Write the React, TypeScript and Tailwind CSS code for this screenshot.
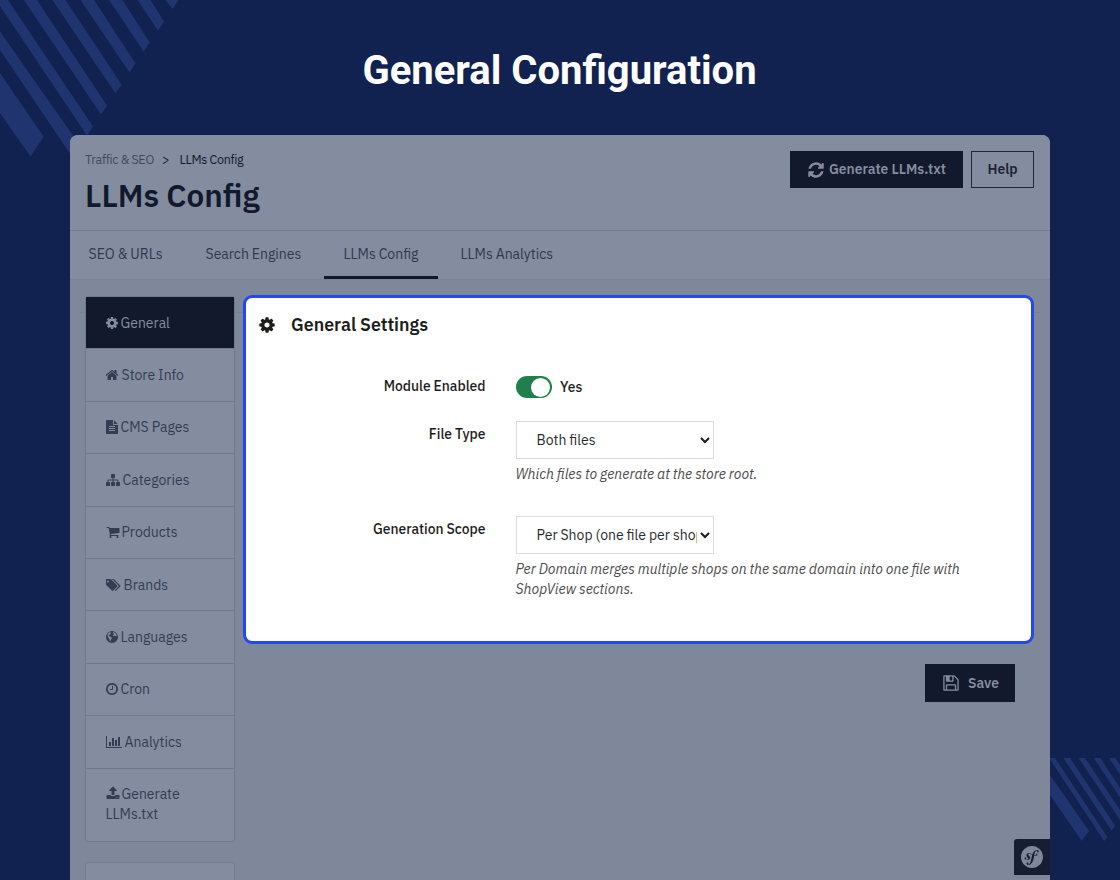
import type { ReactNode } from 'react';
import { SiSymfony } from 'react-icons/si';

interface GlyphProps {
  d: string;
  width?: number;
  className?: string;
}

function Glyph({ d, width = 1792, className = '' }: GlyphProps) {
  return (
    <svg viewBox={`0 0 ${width} 1792`} fill="currentColor" className={`inline-block shrink-0 ${className}`}>
      <path d={d} />
    </svg>
  );
}

const COG =
  'M1152 896q0-106-75-181t-181-75-181 75-75 181 75 181 181 75 181-75 75-181zm512-109v222q0 12-8 23t-20 13l-185 28q-19 54-39 91 35 50 107 138 10 12 10 25t-9 23q-27 37-99 108t-94 71q-12 0-26-9l-138-108q-44 23-91 38-16 136-29 186-7 28-36 28h-222q-14 0-24.5-8.5t-11.5-21.5l-28-184q-49-16-90-37l-141 107q-10 9-25 9-14 0-25-11-126-114-165-168-7-10-7-23 0-12 8-23 15-21 51-66.5t54-70.5q-27-50-41-99l-183-27q-13-2-21-12.5t-8-23.5v-222q0-12 8-23t19-13l186-28q14-46 39-92-40-57-107-138-10-12-10-24 0-10 9-23 26-36 98.5-107.5t94.5-71.5q13 0 26 10l138 107q44-23 91-38 16-136 29-186 7-28 36-28h222q14 0 24.5 8.5t11.5 21.5l28 184q49 16 90 37l142-107q9-9 24-9 13 0 25 10 129 119 165 170 7 8 7 22 0 12-8 23-15 21-51 66.5t-54 70.5q26 50 41 98l183 28q13 2 21 12.5t8 23.5z';
const HOME =
  'M1472 992v480q0 26-19 45t-45 19h-384v-384h-256v384h-384q-26 0-45-19t-19-45v-480q0-1 .5-3t.5-3l575-474 575 474q1 2 1 6zm223-69l-62 74q-8 9-21 11h-3q-13 0-21-7l-692-577-692 577q-12 8-24 7-13-2-21-11l-62-74q-8-10-7-23.5t11-21.5l719-599q32-26 76-26t76 26l244 204v-195q0-14 9-23t23-9h192q14 0 23 9t9 23v408l219 182q10 8 11 21.5t-7 23.5z';
const FILE_TEXT =
  'M1596 476q14 14 28 36h-472v-472q22 14 36 28zm-476 164h544v1056q0 40-28 68t-68 28h-1344q-40 0-68-28t-28-68v-1600q0-40 28-68t68-28h800v544q0 40 28 68t68 28zm160 736v-64q0-14-9-23t-23-9h-704q-14 0-23 9t-9 23v64q0 14 9 23t23 9h704q14 0 23-9t9-23zm0-256v-64q0-14-9-23t-23-9h-704q-14 0-23 9t-9 23v64q0 14 9 23t23 9h704q14 0 23-9t9-23zm0-256v-64q0-14-9-23t-23-9h-704q-14 0-23 9t-9 23v64q0 14 9 23t23 9h704q14 0 23-9t9-23z';
const SITEMAP =
  'M1792 1248v320q0 40-28 68t-68 28h-320q-40 0-68-28t-28-68v-320q0-40 28-68t68-28h96v-192h-512v192h96q40 0 68 28t28 68v320q0 40-28 68t-68 28h-320q-40 0-68-28t-28-68v-320q0-40 28-68t68-28h96v-192h-512v192h96q40 0 68 28t28 68v320q0 40-28 68t-68 28h-320q-40 0-68-28t-28-68v-320q0-40 28-68t68-28h96v-192q0-52 38-90t90-38h512v-192h-96q-40 0-68-28t-28-68v-320q0-40 28-68t68-28h320q40 0 68 28t28 68v320q0 40-28 68t-68 28h-96v192h512q52 0 90 38t38 90v192h96q40 0 68 28t28 68z';
const CART =
  'M704 1536q0 52-38 90t-90 38-90-38-38-90 38-90 90-38 90 38 38 90zm896 0q0 52-38 90t-90 38-90-38-38-90 38-90 90-38 90 38 38 90zm128-1088v512q0 24-16.5 42.5t-40.5 21.5l-1044 122q13 60 13 70 0 16-24 64h920q26 0 45 19t19 45-19 45-45 19h-1024q-26 0-45-19t-19-45q0-11 8-31.5t16-36 21.5-40 15.5-29.5l-177-823h-204q-26 0-45-19t-19-45 19-45 45-19h256q16 0 28.5 6.5t19.5 15.5 13 24.5 8 26 5.5 29.5 4.5 26h1201q26 0 45 19t19 45z';
const TAGS =
  'M384 448q0-53-37.5-90.5t-90.5-37.5-90.5 37.5-37.5 90.5 37.5 90.5 90.5 37.5 90.5-37.5 37.5-90.5zm1067 576q0 53-37 90l-491 492q-39 37-91 37-53 0-90-37l-715-716q-38-37-64.5-101t-26.5-117v-416q0-52 38-90t90-38h416q53 0 117 26.5t102 64.5l715 714q37 39 37 91zm384 0q0 53-37 90l-491 492q-39 37-91 37-36 0-59-14t-53-45l470-470q37-37 37-90 0-52-37-91l-715-714q-38-38-102-64.5t-117-26.5h224q53 0 117 26.5t102 64.5l715 714q37 39 37 91z';
const GLOBE =
  'M896 128a768 768 0 1 0 0 1536a768 768 0 1 0 0-1536zM1010 300l230 20 200 200 80 230-130 60-170-70-90 50-110-90 60-120 100-40-80-90-90 30zM330 540l160-190 190-70 100 90-120 140-70 130-110 60 60 90 120 60 170 80 60 110-110 150-80 240-90-20-60-270-110-160-90-170z';
const CLOCK =
  'M1024 544v448q0 14-9 23t-23 9h-320q-14 0-23-9t-9-23v-64q0-14 9-23t23-9h224v-352q0-14 9-23t23-9h64q14 0 23 9t9 23zm416 352q0-148-73-273t-198-198-273-73-273 73-198 198-73 273 73 273 198 198 273 73 273-73 198-198 73-273zm224 0q0 209-103 385.5t-279.5 279.5-385.5 103-385.5-103-279.5-279.5-103-385.5 103-385.5 279.5-279.5 385.5-103 385.5 103 279.5 279.5 103 385.5z';
const CHART =
  'M640 896v512h-256v-512h256zm384-512v1024h-256v-1024h256zm1024 1152v128h-2048v-1536h128v1408h1920zm-640-896v768h-256v-768h256zm384-384v1152h-256v-1152h256z';
const UPLOAD =
  'M1344 1472q0-26-19-45t-45-19-45 19-19 45 19 45 45 19 45-19 19-45zm256 0q0-26-19-45t-45-19-45 19-19 45 19 45 45 19 45-19 19-45zm128-224v320q0 40-28 68t-68 28h-1472q-40 0-68-28t-28-68v-320q0-40 28-68t68-28h427q21 56 70.5 92t110.5 36h256q61 0 110.5-36t70.5-92h427q40 0 68 28t28 68zm-325-648q-17 40-59 40h-256v448q0 26-19 45t-45 19h-256q-26 0-45-19t-19-45v-448h-256q-42 0-59-40-17-39 14-69l448-448q18-19 45-19t45 19l448 448q31 30 14 69z';
const REFRESH =
  'M1639 1056q0 5-1 7-64 268-268 434.5t-478 166.5q-146 0-282.5-55t-243.5-157l-129 129q-19 19-45 19t-45-19-19-45v-448q0-26 19-45t45-19h448q26 0 45 19t19 45-19 45l-137 137q71 66 161 102t187 36q134 0 250-65t186-179q11-17 53-117 8-23 30-23h192q13 0 22.5 9.5t9.5 22.5zm25-800v448q0 26-19 45t-45 19h-448q-26 0-45-19t-19-45 19-45l138-138q-148-137-349-137-134 0-250 65t-186 179q-11 17-53 117-8 23-30 23h-199q-13 0-22.5-9.5t-9.5-22.5v-7q65-268 270-434.5t480-166.5q146 0 284 55.5t245 156.5l130-129q19-19 45-19t45 19 19 45z';
const FLOPPY =
  'M512 1536h768v-384h-768v384zm896 0h128v-896q0-14-10-38.5t-20-34.5l-281-281q-10-10-34-20t-39-10v416q0 40-28 68t-68 28h-576q-40 0-68-28t-28-68v-416h-128v1280h128v-416q0-40 28-68t68-28h832q40 0 68 28t28 68v416zm-384-928v-320q0-13-9.5-22.5t-22.5-9.5h-192q-13 0-22.5 9.5t-9.5 22.5v320q0 13 9.5 22.5t22.5 9.5h192q13 0 22.5-9.5t9.5-22.5zm640 32v928q0 40-28 68t-68 28h-1344q-40 0-68-28t-28-68v-1344q0-40 28-68t68-28h928q40 0 88 20t76 48l280 280q28 28 48 76t20 88z';

const menu = [
  { label: 'General', icon: COG, size: 'w-[14px] -ml-[1px]', gap: 'ml-[2px]', active: true },
  { label: 'Store Info', icon: HOME, size: 'w-[14px] -ml-[0.5px]', gap: 'ml-[2.5px]' },
  { label: 'CMS Pages', icon: FILE_TEXT, size: 'w-[14px] -ml-[1px]', gap: 'ml-[2px]' },
  { label: 'Categories', icon: SITEMAP, size: 'w-[14px]', gap: 'ml-[3px]' },
  { label: 'Products', icon: CART, size: 'w-[14px]', gap: 'ml-[2px]' },
  { label: 'Brands', icon: TAGS, width: 1920, size: 'w-[15px]', gap: 'ml-[3px]' },
  { label: 'Languages', icon: GLOBE, size: 'w-[14px] -ml-[1px]', gap: 'ml-[2px]' },
  { label: 'Cron', icon: CLOCK, size: 'w-[14px] -ml-[1px]', gap: 'ml-[2px]' },
  { label: 'Analytics', icon: CHART, width: 2048, size: 'w-[16px]', gap: 'ml-[3px]' },
];

function TopStripes() {
  return (
    <svg viewBox="0 0 180 157" fill="#20356f" className="absolute left-0 top-0 h-[157px] w-[180px]">
      <path d="M0 73V113L30.500 156.500L43.700 136.700z" />
      <path d="M0 31.500V50L72 156.500L79.500 145z" />
      <path d="M-4 0H8L93 126.500L87 135.500z" />
      <path d="M24 0H37L107 105.500L101 114.500z" />
      <path d="M52.500 0H65.500L121.500 84.500L115.500 93.500z" />
      <path d="M80.500 0H94L135.500 63.500L129.500 72.500z" />
      <path d="M109 0H122.500L149.700 42.500L143.700 51.500z" />
      <path d="M137.500 0H150.500L164 21.500L158 30.500z" />
      <path d="M165.500 0H178.500L172.500 9z" />
    </svg>
  );
}

function BottomStripes() {
  return (
    <svg viewBox="0 0 70 84" fill="#20356f" className="absolute right-0 top-[758px] h-[84px] w-[70px]">
      <path d="M0 17L39 73L31.700 83L0 37z" />
      <path d="M-1 0H5L57.300 79L54.300 83z" />
      <path d="M13.300 0H20L65.300 68L61.500 72.500z" />
      <path d="M28.700 0H35L70 52V62z" />
      <path d="M43.700 0H50.300L70 30V39.500z" />
      <path d="M59 0H65.500L70 7V16.500z" />
    </svg>
  );
}

function SelectBox({ value }: { value: string }) {
  return (
    <div className="flex h-[38px] w-[198px] items-center border border-[#dddddd] bg-white pl-5 pr-[3px]">
      <span className="w-[160.5px] overflow-hidden whitespace-nowrap leading-5 text-[#282b30]">{value}</span>
      <svg viewBox="0 0 10 8" className="ml-auto h-2 w-[10px] fill-none stroke-[#1d1d1b] stroke-2">
        <path d="M1 2l4 4 4-4" />
      </svg>
    </div>
  );
}

interface RowProps {
  label: string;
  labelClass?: string;
  children: ReactNode;
}

function Row({ label, labelClass = '', children }: RowProps) {
  return (
    <div className="flex">
      <div className={`w-[239.5px] text-right text-[13.875px] font-medium leading-5 text-[#1d1d1b] ${labelClass}`}>
        {label}
      </div>
      <div className="ml-[30px] w-[460px]">{children}</div>
    </div>
  );
}

export default function App() {
  return (
    <div className="relative flex h-[880px] w-[1120px] flex-col overflow-hidden bg-[#112150] font-['IBM_Plex_Sans',Roboto,sans-serif]">
      <TopStripes />
      <BottomStripes />

      <h1 className="h-[135px] shrink-0 pr-px pt-[47px] text-center font-[Roboto,sans-serif] text-[40px] font-bold leading-[48px] text-white">
        General Configuration
      </h1>

      <main className="relative mx-[70px] flex flex-1 flex-col overflow-hidden rounded-t-[8px] bg-[#7f889b] text-[14px] [word-spacing:-0.35px]">
        <header className="flex h-24 shrink-0 justify-between border-b border-[#747d92] bg-[#848d9f] pl-[15px] pr-4">
          <div>
            <div className="mt-4 flex h-4 items-center text-[12.5px] tracking-[-0.28px] text-[#12192c]">
              <span className="w-[77px] text-[#414a60]">Traffic &amp; SEO</span>
              <span className="w-[17.5px]">&gt;</span>
              <span>LLMs Config</span>
            </div>
            <h2 className="mt-[9px] text-[31.5px] font-semibold leading-10 text-[#12192c]">LLMs Config</h2>
          </div>
          <div className="mt-4 flex h-[37px] gap-2 text-[13.875px] font-semibold">
            <button className="flex w-[173px] items-center bg-[#12192c] pl-[17px] text-[#848d9f]">
              <Glyph d={REFRESH} className="w-[18px]" />
              <span className="ml-1">Generate LLMs.txt</span>
            </button>
            <button className="w-[63px] border border-[#1d263a] text-[#1d2435]">Help</button>
          </div>
        </header>

        <nav className="flex h-[49px] shrink-0 border-b border-[#798296] bg-[#848d9f] leading-[46px] text-[#303850]">
          <span className="w-[116px] pl-[18.5px]">SEO &amp; URLs</span>
          <span className="w-[138px] pl-[19.5px]">Search Engines</span>
          <span className="w-[114px] border-b-[3px] border-[#12192c] text-center">LLMs Config</span>
          <span className="pl-[22.5px]">LLMs Analytics</span>
        </nav>

        <div className="flex flex-1 items-start pl-[10px]">
          <div className="mt-[32px] w-[5px] border-t border-[#767f94]" />
          <aside className="mt-4 w-[150px] shrink-0">
            <div className="rounded-[3px] border border-[#6f788e] bg-[#848d9f] leading-5 text-[#343c53]">
              {menu.map((item) => (
                <div
                  key={item.label}
                  className={`flex h-[52.4px] items-center border-b border-[#707990] pl-[19.5px] ${item.active ? 'bg-[#12192c] text-[#848d9f]' : ''}`}
                >
                  <Glyph d={item.icon} width={item.width} className={item.size} />
                  <span className={item.gap}>{item.label}</span>
                </div>
              ))}
              <div className="h-[72px] pl-[19.5px] pt-[15px]">
                <Glyph d={UPLOAD} className="-mt-[3px] mr-[2px] w-[14px]" />
                Generate
                <br />
                LLMs.txt
              </div>
            </div>
            <div className="mt-5 h-10 rounded-t-[3px] border border-[#747d92] bg-[#848d9f]" />
          </aside>
          <div className="mt-[32px] w-2 border-t border-[#767f94]" />

          <div className="mt-[15px] flex w-[791px] shrink-0 flex-col">
            <section className="h-[349px] rounded-[9px] border-[3px] border-[#2249ee] bg-white pt-[15px]">
              <h3 className="flex h-6 items-center pl-[12px] text-[17.85px] font-semibold text-[#1d1d1b]">
                <Glyph d={COG} className="w-[18px]" />
                <span className="ml-[15px]">General Settings</span>
              </h3>
              <div className="mt-[39px]">
                <Row label="Module Enabled">
                  <div className="flex h-[22px] items-center">
                    <span className="flex h-[22px] w-9 items-center justify-end rounded-full bg-[#20804c] pr-[1.5px]">
                      <span className="size-[19px] rounded-full bg-white" />
                    </span>
                    <span className="ml-[8.5px] text-[13.875px] font-medium text-[#1d1d1b]">Yes</span>
                  </div>
                </Row>
              </div>
              <div className="mt-[23px]">
                <Row label="File Type" labelClass="pt-[3px]">
                  <SelectBox value="Both files" />
                  <p className="mt-[5px] italic leading-5 text-[#4c4c4e]">Which files to generate at the store root.</p>
                </Row>
              </div>
              <div className="mt-8">
                <Row label="Generation Scope" labelClass="pt-[3px]">
                  <SelectBox value="Per Shop (one file per shop)" />
                  <p className="mt-[5px] italic leading-5 text-[#4c4c4e]">
                    Per Domain merges multiple shops on the same domain into one file with
                    <br />
                    ShopView sections.
                  </p>
                </Row>
              </div>
            </section>
            <button className="mr-[19px] mt-5 flex h-[38px] w-[90px] items-center self-end bg-[#12192c] pl-[17px] text-[13.875px] font-semibold text-[#848d9f]">
              <Glyph d={FLOPPY} className="w-[18px]" />
              <span className="ml-[8px]">Save</span>
            </button>
          </div>
          <div className="mt-[32px] w-[6px] border-t border-[#767f94]" />
        </div>

        <div className="absolute bottom-[5px] right-0 flex h-9 w-9 items-center justify-center rounded-tl-[3px] bg-[#161e31] text-[#7f889b]">
          <SiSymfony className="size-[22px]" />
        </div>
      </main>
    </div>
  );
}
